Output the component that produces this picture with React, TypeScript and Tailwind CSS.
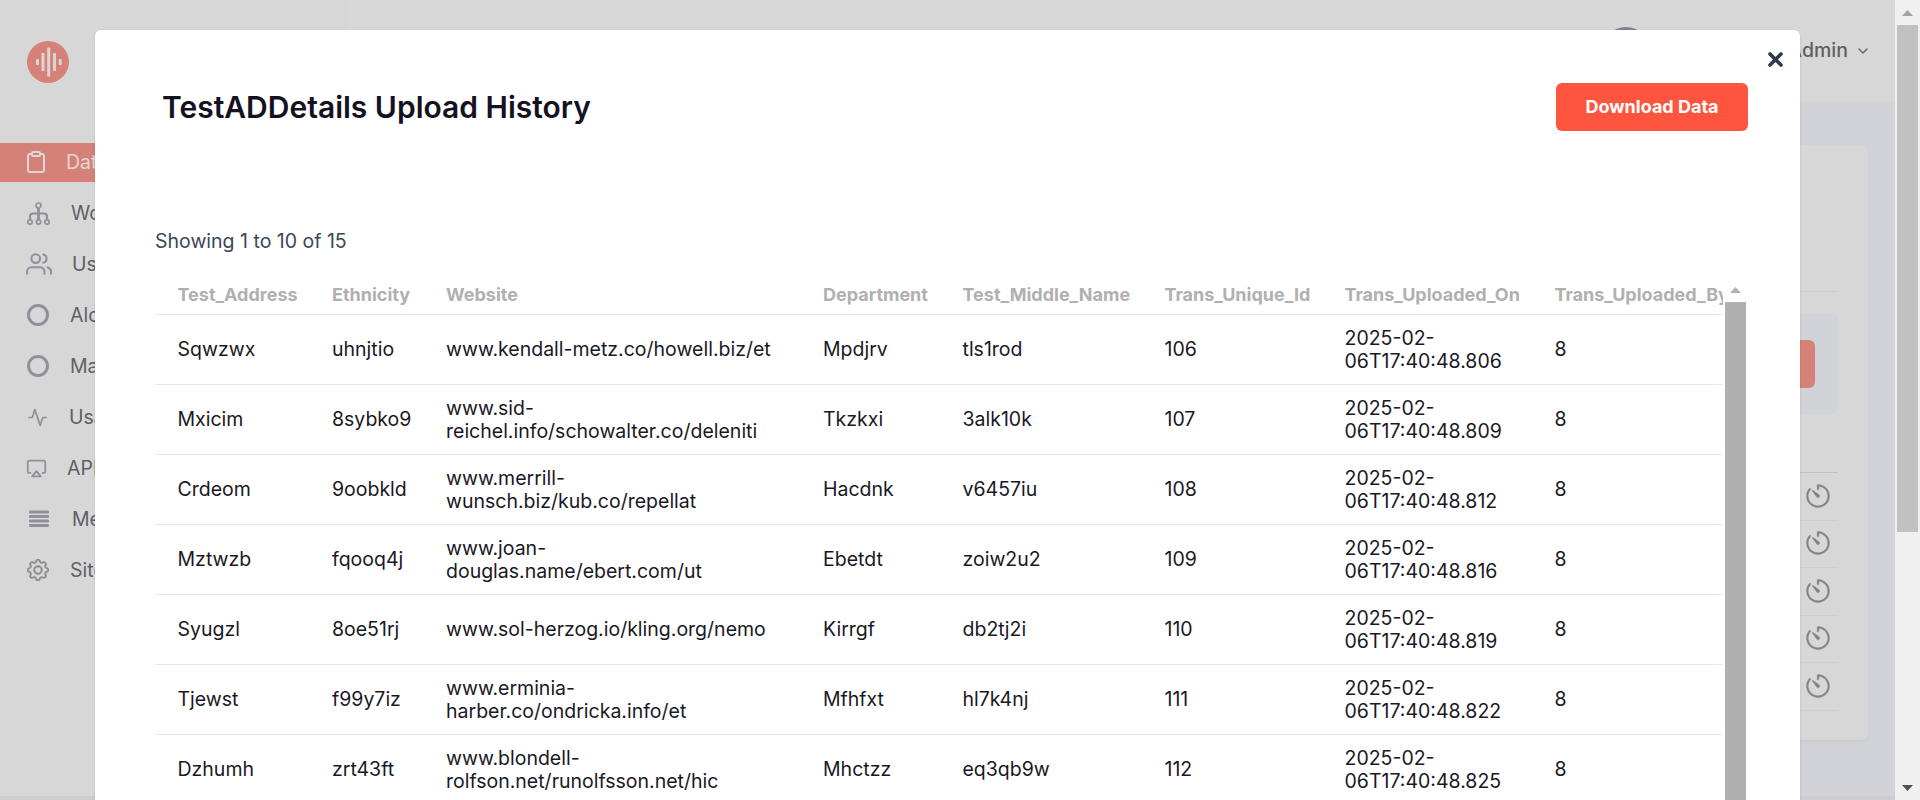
import type { ReactNode } from "react";
import { FiActivity, FiAirplay, FiChevronDown, FiClipboard, FiUsers } from "react-icons/fi";
import { BsGear } from "react-icons/bs";
import { RxTimer } from "react-icons/rx";

const ROWS = [
  ["Sqwzwx", "uhnjtio", "www.kendall-metz.co/howell.biz/et", "Mpdjrv", "tls1rod", "106", "2025-02-06T17:40:48.806", "8"],
  ["Mxicim", "8sybko9", "www.sid-reichel.info/schowalter.co/deleniti", "Tkzkxi", "3alk10k", "107", "2025-02-06T17:40:48.809", "8"],
  ["Crdeom", "9oobkld", "www.merrill-wunsch.biz/kub.co/repellat", "Hacdnk", "v6457iu", "108", "2025-02-06T17:40:48.812", "8"],
  ["Mztwzb", "fqooq4j", "www.joan-douglas.name/ebert.com/ut", "Ebetdt", "zoiw2u2", "109", "2025-02-06T17:40:48.816", "8"],
  ["Syugzl", "8oe51rj", "www.sol-herzog.io/kling.org/nemo", "Kirrgf", "db2tj2i", "110", "2025-02-06T17:40:48.819", "8"],
  ["Tjewst", "f99y7iz", "www.erminia-harber.co/ondricka.info/et", "Mfhfxt", "hl7k4nj", "111", "2025-02-06T17:40:48.822", "8"],
  ["Dzhumh", "zrt43ft", "www.blondell-rolfson.net/runolfsson.net/hic", "Mhctzz", "eq3qb9w", "112", "2025-02-06T17:40:48.825", "8"],
];

const HEADERS = [
  "Test_Address",
  "Ethnicity",
  "Website",
  "Department",
  "Test_Middle_Name",
  "Trans_Unique_Id",
  "Trans_Uploaded_On",
  "Trans_Uploaded_By",
];

const COLUMNS = "grid grid-cols-[154.5px_114px_377px_139.500px_202px_180px_210px_240px]";

function Logo() {
  return (
    <svg className="size-[42px]" viewBox="0 0 42 42">
      <circle cx="21" cy="21" r="21" fill="#d68177" />
      <g fill="#dcd5d4">
        <rect x="9" y="18" width="3" height="6" rx="0.6" />
        <rect x="14.5" y="12" width="3" height="18" rx="0.6" />
        <rect x="20.2" y="6.5" width="3" height="29" rx="0.6" />
        <rect x="26" y="12" width="3" height="18" rx="0.6" />
        <rect x="31.7" y="18" width="3" height="6" rx="0.6" />
      </g>
    </svg>
  );
}

function TreeIcon() {
  return (
    <svg className="-mt-px h-[23px] w-[24px] shrink-0" viewBox="0 0 24 23" fill="none" stroke="#928f9d" strokeWidth="1.7">
      <circle cx="11.5" cy="3.5" r="2.5" />
      <path d="M11.5 6v11.5" strokeWidth="2.8" />
      <path d="M3 17.500v-3a3 3 0 0 1 3-3h11a3 3 0 0 1 3 3v3" strokeWidth="2.2" />
      <circle cx="3" cy="20" r="2.200" />
      <circle cx="11.500" cy="20" r="2.200" />
      <circle cx="20" cy="20" r="2.200" />
    </svg>
  );
}

function RingIcon() {
  return (
    <svg className="-mt-px size-[22px] shrink-0" viewBox="0 0 22 22">
      <circle cx="11" cy="11" r="9.500" fill="none" stroke="#928f9d" strokeWidth="3" />
    </svg>
  );
}

function LinesIcon() {
  return (
    <svg className="-mt-px h-[18px] w-[20px] shrink-0" viewBox="0 0 20 18" fill="#928f9d">
      <rect y="0.500" width="20" height="3" rx="1.200" />
      <rect y="5" width="20" height="3" rx="1.200" />
      <rect y="9.500" width="20" height="3" rx="1.200" />
      <rect y="14" width="20" height="3" rx="1.200" />
    </svg>
  );
}

function NavItem({ icon, label, iconBox, active }: { icon: ReactNode; label: string; iconBox: string; active?: boolean }) {
  return (
    <li
      className={
        active
          ? "flex h-[39px] items-center bg-[#d68177] text-[#dfd7d6]"
          : "flex h-[39px] items-center text-[#605f66]"
      }
    >
      <span className={iconBox}>{icon}</span>
      <span className="whitespace-nowrap text-[19.500px]">{label}</span>
    </li>
  );
}

function Sidebar() {
  return (
    <aside className="flex h-full w-[346px] shrink-0 flex-col border-r border-[#d3d3d3]">
      <div className="pt-[41px] pl-[27px]">
        <Logo />
      </div>
      <ul className="mt-[60px] flex flex-col gap-3">
        <NavItem active label="Data" iconBox="w-[66px] pl-[24px]" icon={<FiClipboard className="-mt-px size-[24px]" strokeWidth={2} />} />
        <NavItem label="Workflow" iconBox="w-[71px] pl-[27px]" icon={<TreeIcon />} />
        <NavItem label="Users" iconBox="w-[72px] pl-[26px]" icon={<FiUsers className="-mt-px size-[26px] text-[#928f9d]" strokeWidth={1.900} />} />
        <NavItem label="Alchemy" iconBox="w-[70px] pl-[27px]" icon={<RingIcon />} />
        <NavItem label="Management" iconBox="w-[70px] pl-[27px]" icon={<RingIcon />} />
        <NavItem label="Usage" iconBox="w-[69px] pl-[27px]" icon={<FiActivity className="-mt-px size-[21px] text-[#928f9d]" strokeWidth={1.900} />} />
        <NavItem label="API" iconBox="w-[67px] pl-[26px]" icon={<FiAirplay className="-mt-px size-[21px] text-[#928f9d]" strokeWidth={2} />} />
        <NavItem label="Messages" iconBox="w-[72px] pl-[29px]" icon={<LinesIcon />} />
        <NavItem label="Site" iconBox="w-[70px] pl-[27px]" icon={<BsGear className="-mt-px size-[22px] text-[#8a8a8a]" strokeWidth={0.35} />} />
      </ul>
    </aside>
  );
}

function Background() {
  return (
    <div className="flex h-full w-[1895px] flex-col bg-[#cdcdd2]">
      <div className="flex h-[796px] bg-[#d7d7d7]">
        <Sidebar />
        <div className="flex flex-1 flex-col">
          <header className="flex h-[101px] shrink-0 justify-end pr-[24px]">
            <div className="mt-[27px] mr-[77px] size-12 rounded-full bg-[#7d8296]" />
            <div className="flex h-[101px] w-[144px] items-center justify-end gap-[7px]">
              <span className="text-[19.500px] font-medium whitespace-nowrap text-[#605f66]">Super Admin</span>
              <FiChevronDown className="size-[16px] shrink-0 text-[#605f66]" />
            </div>
          </header>
          <main className="flex-1 bg-[#d2d3d8] pt-[44px] pr-[27px] pl-[27px]">
            <section className="flex h-[595px] flex-col rounded-md bg-[#d7d7d7] pr-[30px] pl-[30px] shadow-[0_2px_4px_rgba(0,0,0,0.04)]">
              <div className="h-[147px] shrink-0 border-b border-[#cdcdcd]" />
              <div className="mt-[21px] flex h-[101px] shrink-0 items-start justify-end rounded-md bg-[#d2d3d8] pt-[27px] pr-[23px]">
                <div className="h-[48px] w-[160px] rounded-md bg-[#d68177]" />
              </div>
              <div className="h-[59px] shrink-0 border-b border-[#c0c0c0]" />
              {[0, 1, 2, 3, 4].map((i) => (
                <div key={i} className="flex h-[47.500px] shrink-0 items-center justify-end border-b border-[#cecece] pr-[7px] pb-px">
                  <RxTimer className="size-[26px] text-[#828282]" stroke="#828282" strokeWidth={0.2} />
                </div>
              ))}
            </section>
          </main>
        </div>
      </div>
    </div>
  );
}

function PageScrollbar() {
  return (
    <div className="flex h-full w-[25px] shrink-0 flex-col items-center bg-[#f0f0f0]">
      <div className="flex h-[25px] items-center pt-px">
        <svg className="h-[6px] w-[11px]" viewBox="0 0 11 6" fill="#a3a3a3"><path d="M0 6 5.500 0 11 6z" /></svg>
      </div>
      <div className="h-[507px] w-[21px] bg-[#c1c1c1]" />
      <div className="mt-auto flex h-[25px] items-center">
        <svg className="h-[6px] w-[11px]" viewBox="0 0 11 6" fill="#505050"><path d="M0 0h11L5.500 6z" /></svg>
      </div>
    </div>
  );
}

function HistoryTable() {
  return (
    <div className="flex h-[523px]">
      <div className="w-[1568px] overflow-hidden text-[19.500px] leading-[23px]">
        <div className={`${COLUMNS} h-[38px] border-b border-[#e6e6f2] pt-[6px] text-[18px] font-bold text-[#b0b0b0]`}>
          {HEADERS.map((h) => (
            <div key={h} className="pl-[22.500px] whitespace-nowrap">{h}</div>
          ))}
        </div>
        {ROWS.map((row) => (
          <div key={row[0]} className={`${COLUMNS} h-[70px] items-center border-b border-[#e6e6f2] text-[#1a1825]`}>
            {row.map((cell, i) => (
              <div key={i} className="pr-[22px] pl-[22.500px]">{cell}</div>
            ))}
          </div>
        ))}
      </div>
      <div className="ml-0.5 flex w-[21px] flex-col items-center">
        <div className="flex h-[25px] items-end pb-[9px]">
          <svg className="h-[6px] w-[11px]" viewBox="0 0 11 6" fill="#b0b0b0"><path d="M0 6 5.500 0 11 6z" /></svg>
        </div>
        <div className="w-full flex-1 bg-[#b0b0b0]" />
      </div>
    </div>
  );
}

function Modal() {
  return (
    <div className="absolute top-[30px] left-[95px] h-[770px] w-[1705px] overflow-hidden rounded-t-md bg-white pl-[60px] shadow-[0_1px_3px_rgba(0,0,0,0.12)]">
      <div className="flex h-[53px] justify-end pt-[22px] pr-[17px]">
        <svg className="size-[15px]" viewBox="0 0 15 15" stroke="#2c3a4b" strokeWidth="3.600" strokeLinecap="round">
          <path d="M2 2 13 13M13 2 2 13" />
        </svg>
      </div>
      <div className="flex h-12 items-center justify-between pr-[52px] pl-[7px]">
        <h2 className="text-[30px] font-semibold text-[#15121f]">TestADDetails Upload History</h2>
        <button className="h-12 w-[192px] rounded-md bg-[#ff553e] pb-0.5 text-[18px] font-bold text-white">Download Data</button>
      </div>
      <p className="mt-[98px] h-[48px] text-[19.500px] leading-[24px] text-[#3a4859]">Showing 1 to 10 of 15</p>
      <HistoryTable />
    </div>
  );
}

export default function App() {
  return (
    <div className="relative flex h-[800px] w-[1920px] overflow-hidden bg-white font-['Inter',sans-serif]">
      <Background />
      <PageScrollbar />
      <Modal />
    </div>
  );
}
